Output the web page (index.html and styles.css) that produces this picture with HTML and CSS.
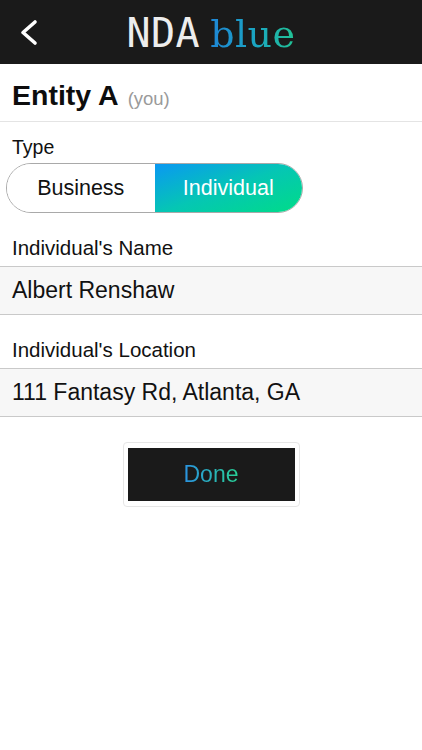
FILE: index.html
```html
<!DOCTYPE html>
<html lang="en">
<head>
<meta charset="utf-8">
<title>NDA blue</title>
<link rel="stylesheet" href="styles.css">
</head>
<body>
<header class="topbar">
  <div class="topbar-side">
    <button class="back" aria-label="Back">
      <svg width="20" height="28" viewBox="0 0 20 28"><path d="M16 3 L4 13.5 L16 24" fill="none" stroke="#fff" stroke-width="3.6" stroke-linecap="round" stroke-linejoin="round"/></svg>
    </button>
  </div>
  <div class="logo"><span class="logo-nda">NDA</span><span class="logo-blue">blue</span></div>
  <div class="topbar-side"></div>
</header>

<section class="entity-head">
  <h1 class="entity-title">Entity A</h1>
  <span class="entity-you">(you)</span>
</section>

<main class="form">
  <div class="label label-type">Type</div>
  <div class="segmented">
    <div class="seg seg-off">Business</div>
    <div class="seg seg-on">Individual</div>
  </div>

  <div class="label label-field">Individual's Name</div>
  <div class="input">Albert Renshaw</div>

  <div class="label label-field">Individual's Location</div>
  <div class="input">111 Fantasy Rd, Atlanta, GA</div>

  <div class="done-wrap">
    <div class="done-frame">
      <button class="done"><span class="done-text">Done</span></button>
    </div>
  </div>
</main>
</body>
</html>
```
FILE: styles.css
```css
* { box-sizing: border-box; }
html, body { margin: 0; padding: 0; }
body {
  width: 422px;
  height: 750px;
  background: #fff;
  font-family: "Liberation Sans", Arial, sans-serif;
  color: #111;
  overflow: hidden;
}

.topbar {
  height: 64px;
  background: #1a1a1a;
  display: grid;
  grid-template-columns: 1fr auto 1fr;
  align-items: center;
}
.topbar-side { display: flex; align-items: center; }
.back {
  background: none;
  border: 0;
  padding: 0;
  margin-left: 19px;
  margin-top: 1px;
  width: 20px;
  height: 28px;
  display: block;
}
.back svg { display: block; }
.logo {
  display: flex;
  align-items: baseline;
  height: 64px;
  line-height: 64px;
  padding-top: 1px;
}
.logo-nda {
  font-family: "DejaVu Sans Mono", monospace;
  font-size: 40px;
  color: #ededed;
  letter-spacing: 0.5px;
}
.logo-blue {
  font-family: "DejaVu Serif", "Liberation Serif", serif;
  font-size: 38px;
  letter-spacing: 0.5px;
  margin-left: 10px;
  background: linear-gradient(90deg, #1f86d6 0%, #1aa6c0 55%, #22c493 100%);
  -webkit-background-clip: text;
  background-clip: text;
  color: transparent;
}

.entity-head {
  height: 58px;
  padding: 14px 12px 0;
  border-bottom: 1px solid #e4e4e4;
  display: flex;
  align-items: baseline;
  line-height: 34px;
}
.entity-title {
  margin: 0;
  font-size: 28.5px;
  font-weight: bold;
  color: #0d0d0d;
}
.entity-you {
  margin-left: 9px;
  font-size: 18.5px;
  color: #9a9a9a;
}

.form { display: flex; flex-direction: column; }
.label {
  font-size: 20.5px;
  line-height: 24px;
  height: 24px;
  padding-left: 12px;
  color: #111;
}
.label-type { margin-top: 13px; font-size: 19.5px; }
.label-field { margin-top: 23px; }

.segmented {
  margin: 4px 0 0 6px;
  width: 297px;
  height: 50px;
  border: 1px solid #a9a9a9;
  border-radius: 25px;
  overflow: hidden;
  display: grid;
  grid-template-columns: 1fr 1fr;
}
.seg {
  display: flex;
  align-items: center;
  justify-content: center;
  font-size: 21.5px;
}
.seg-off { background: #fff; color: #111; }
.seg-on {
  background: linear-gradient(160deg, #0a98f2 0%, #05c6b4 50%, #00dc88 100%);
  color: #fff;
}

.input {
  margin-top: 6px;
  height: 49px;
  background: #f7f7f7;
  border-top: 1px solid #c9c9c9;
  border-bottom: 1px solid #c9c9c9;
  padding-left: 12px;
  font-size: 23px;
  line-height: 47px;
  color: #111;
}

.done-wrap {
  margin-top: 25px;
  display: flex;
  justify-content: center;
}
.done-frame {
  border: 1px solid #e6e6e6;
  border-radius: 4px;
  padding: 5px 4px;
  background: #fff;
}
.done {
  display: flex;
  align-items: center;
  justify-content: center;
  width: 167px;
  height: 53px;
  background: #1a1a1a;
  border: 0;
  padding: 0;
  font-family: "Liberation Sans", Arial, sans-serif;
  font-size: 23px;
}
.done-text {
  background: linear-gradient(90deg, #2a92e0 0%, #28d096 100%);
  -webkit-background-clip: text;
  background-clip: text;
  color: transparent;
}
```
